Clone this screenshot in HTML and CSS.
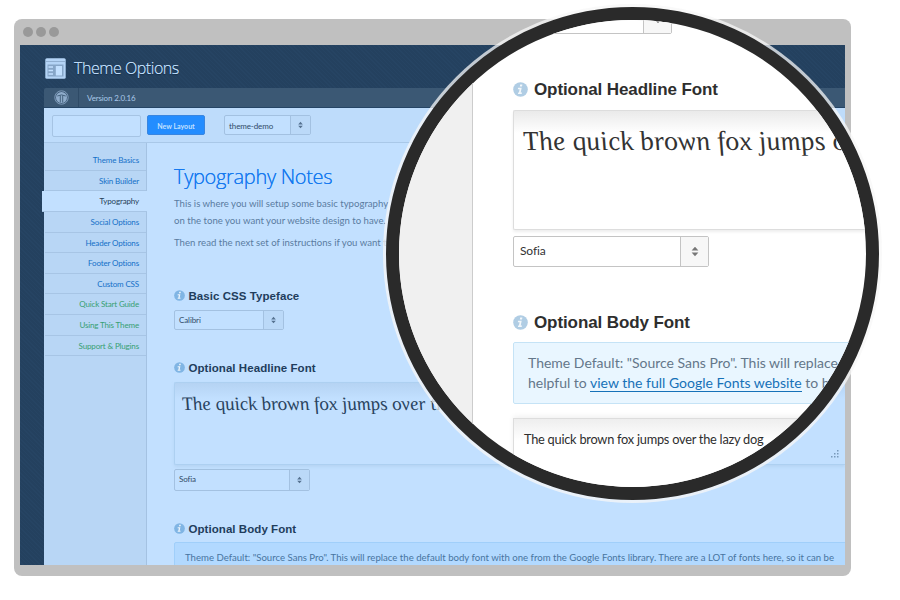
FILE: index.html
```html
<!DOCTYPE html>
<html lang="en">
<head>
<meta charset="utf-8">
<title>Theme Options</title>
<link rel="stylesheet" href="styles.css">
</head>
<body>
<svg class="defs" width="0" height="0" aria-hidden="true">
  <symbol id="info" viewBox="0 0 15 15"><circle cx="7.5" cy="7.5" r="7.3"/><path d="M7.200 2.500h2.200l-.4 2H6.800zM5.100 5.700h3.600l-1 4.700h1.300l-.3 1.500H4.900l.3-1.500h.7l.7-3.200H4.800z" fill="#fff" fill-opacity=".85"/></symbol>
  <symbol id="arrows" viewBox="0 0 8 12"><path d="M4 .8 7.700 5H.3zM4 11.200 7.700 7H.3z"/></symbol>
</svg>
<div class="browser">
  <div class="dots"><i></i><i></i><i></i></div>
  <div class="screen">
    <header class="brand">
      <svg width="21" height="21" viewBox="0 0 21 21"><rect x=".3" y=".3" width="20.400" height="20.400" rx="1.500" fill="#b4d4f6"/><path d="M1 3.500h19" stroke="#86a6c8" stroke-width=".8"/><path d="M2.500 6.500h16v12h-16z" fill="#86a6c8"/><path d="M3.500 9h4.500M3.500 12.500h4.500M3.500 16h4.500" stroke="#c2e0ff" stroke-width="1.600"/><rect x="10.800" y="8" width="6.200" height="9.500" fill="#c2e0ff"/></svg>
      <h1>Theme Options</h1>
    </header>
    <div class="app">
      <div class="version">
        <div class="logo"><svg width="15" height="15" viewBox="0 0 15 15"><circle cx="7.500" cy="7.500" r="6.700" fill="none" stroke="#8faccb" stroke-width=".8"/><circle cx="7.500" cy="7.500" r="5.500" fill="#8faccb"/><path d="M3.300 6q4.200-2.200 8.400 0M6.300 5.500v7M8.700 5.500v7" stroke="#3b5874" stroke-width=".9" fill="none"/></svg></div>
        <span>Version 2.0.16</span>
      </div>
      <div class="toolbar">
        <div class="field"></div>
        <div class="button">New Layout</div>
        <div class="select demo"><span>theme-demo</span><b><svg><use href="#arrows"/></svg></b></div>
      </div>
      <div class="body">
        <nav>
          <a>Theme Basics</a><a>Skin Builder</a><a class="active">Typography</a><a>Social Options</a><a>Header Options</a><a>Footer Options</a><a>Custom CSS</a><a class="green">Quick Start Guide</a><a class="green">Using This Theme</a><a class="green">Support &amp; Plugins</a>
        </nav>
        <main>
          <h2>Typography Notes</h2>
          <p>This is where you will setup some basic typography<br>on the tone you want your website design to have.</p>
          <p>Then read the next set of instructions if you want to</p>
          <h3 class="first"><svg><use href="#info"/></svg>Basic CSS Typeface</h3>
          <div class="select calibri"><span>Calibri</span><b><svg><use href="#arrows"/></svg></b></div>
          <h3 class="second"><svg><use href="#info"/></svg>Optional Headline Font</h3>
          <div class="sample"><span>The quick brown fox jumps over the</span><svg class="grip" width="8" height="8" viewBox="0 0 8 8"><path d="M6 0h1.500v1.500H6zM3 3h1.500v1.500H3zM6 3h1.500v1.500H6zM0 6h1.500v1.500H0zM3 6h1.500v1.500H3zM6 6h1.500v1.500H6z"/></svg></div>
          <div class="select sofia"><span>Sofia</span><b><svg><use href="#arrows"/></svg></b></div>
          <h3 class="third"><svg><use href="#info"/></svg>Optional Body Font</h3>
          <div class="notice">Theme Default: "Source Sans Pro". This will replace the default body font with one from the Google Fonts library. There are a LOT of fonts here, so it can be</div>
        </main>
      </div>
    </div>
  </div>
</div>
<div class="lens">
  <div class="lens-side"></div>
  <div class="lens-main">
    <div class="select cut"><span></span><b><svg><use href="#arrows"/></svg></b></div>
    <h3><svg><use href="#info"/></svg>Optional Headline Font</h3>
    <div class="sample"><span>The quick brown fox jumps o</span></div>
    <div class="select big"><span>Sofia</span><b><svg><use href="#arrows"/></svg></b></div>
    <h3 class="body-font"><svg><use href="#info"/></svg>Optional Body Font</h3>
    <div class="notice">Theme Default: "Source Sans Pro". This will replace<br>helpful to <a>view the full Google Fonts website</a> to be</div>
    <div class="plain">The quick brown fox jumps over the lazy dog</div>
  </div>
</div>
</body>
</html>
```
FILE: styles.css
```css
* { box-sizing: border-box; }
body { margin: 0; width: 900px; height: 600px; position: relative; overflow: hidden; background: #fff; font-family: Lato, "Liberation Sans", sans-serif; }
h1, h2, h3, p { margin: 0; }
.defs { position: absolute; }

.browser { width: 837px; height: 557px; margin: 19px 0 0 14px; padding: 0 6px 11px; background: #c0c0c0; border-radius: 8px; display: flow-root; }
.dots { height: 26px; padding-left: 3px; display: flex; gap: 3px; align-items: center; }
.dots i { width: 10px; height: 10px; border-radius: 50%; background: #999; }
.screen { height: 520px; overflow: hidden; padding-left: 24px; background: repeating-linear-gradient(45deg, #24415f 0 2px, #264463 2px 3px); }
.brand { height: 43px; display: flex; gap: 8px; align-items: center; padding: 3px 0 0 1px; }
.brand h1 { font: 300 16px/22px "Open Sans", sans-serif; letter-spacing: -.45px; color: #c2e0ff; text-shadow: 0 1px 1px #132c46, 0 0 .5px #c2e0ff; white-space: nowrap; }
.version { height: 20px; background: #3b5874; border-bottom: 1px solid #254566; display: flex; align-items: center; font-size: 8px; color: #a9c8e9; border-radius: 2px 0 0 0; }
.logo { width: 35px; height: 19px; border-right: 1px solid #2e4a66; padding: 2px 0 0 10px; }
.logo svg { display: block; }
.version span { margin-left: 8px; letter-spacing: -.15px; padding-top: 1px; }
.toolbar { height: 35px; background: #bedcfb; border-bottom: 1px solid #a9c8e8; display: flex; padding: 7px 0 0 8px; }
.field { width: 89px; height: 22px; border: 1px solid #a6c4e4; border-radius: 2px; background: #c2e0ff; }
.button { width: 58px; height: 20px; margin-left: 6px; background: #248dff; border: 1px solid #3a86e0; border-radius: 2px; color: #c2e0ff; font: 700 7px/20px Lato, sans-serif; text-align: center; }

.select { display: flex; border: 1px solid #a3c1e1; border-radius: 2px; background: #c2e0ff; font-size: 8px; letter-spacing: -.1px; color: #304b68; }
.select span { flex: 1; padding-left: 4px; }
.select b { width: 20px; border-left: 1px solid #a3c1e1; background: #bbd9f8; display: flex; align-items: center; justify-content: center; }
.select svg { width: 5px; height: 8px; fill: #55718f; }
.demo { width: 87px; height: 20px; margin-left: 19px; line-height: 20px; }

.body { display: flex; height: 422px; }
nav { width: 103px; flex: none; padding: 7px 0 0 1px; background: #b8d6f5; border-right: 1px solid #a4c2e2; }
nav a { display: block; height: 20.650px; padding-right: 7px; border-bottom: 1px solid #a7c5e5; text-align: right; font-size: 8px; letter-spacing: -.15px; line-height: 21.300px; color: #1470c8; }
nav .active { margin-left: -3px; background: #c2e0ff; color: #263e59; position: relative; margin-right: -1px; padding-right: 8px; }
nav .green { color: #379f72; }
main { flex: 1; min-width: 0; padding: 20px 0 0 27px; background: #c2e0ff; white-space: nowrap; }
h2 { font: 300 20px/28px "Open Sans", sans-serif; letter-spacing: -.32px; color: #1679ef; text-shadow: 0 0 .5px #1679ef; }
main p { font-size: 9.600px; line-height: 16.500px; color: #5a7c9f; margin-top: 5px; }
main p + p { margin-top: 6px; }
h3 { font: 700 11.500px/14px "Liberation Sans", sans-serif; color: #1f3d5c; display: flex; align-items: center; letter-spacing: .06px; }
h3 svg { width: 11px; height: 11px; margin-right: 3.500px; fill: #80b5e4; }
.first { margin-top: 37px; }
.calibri { width: 110px; height: 20px; margin-top: 7px; line-height: 18px; }
.second { margin-top: 31px; }
main .sample { height: 83px; margin-top: 7px; position: relative; }
.sample { border: 1px solid #add0f1; border-right: 0; border-radius: 2px 0 0 2px; background: linear-gradient(#b5d3f3, #c2e0ff 16px); box-shadow: 0 2px 3px #adcaea88; color: #29435e; font: italic 19px/42px "Liberation Serif", serif; letter-spacing: 0; padding-left: 7px; }
.sample span { display: inline-block; transform: skewX(14deg); }
.grip { position: absolute; right: 6px; bottom: 6px; fill: #7899ba; }
.sofia { width: 136px; height: 22px; margin-top: 4px; line-height: 18px; }
.third { margin-top: 31px; }
.notice { background: #b2d9ff; border: 1px solid #a0cffa; border-radius: 2px; }
main .notice { height: 50px; margin: 6px -4px 0 0; padding-left: 10px; font-size: 9.600px; line-height: 29px; color: #48759f; }

.lens { position: absolute; left: 386px; top: 7px; width: 493px; height: 493px; border: 13px solid #2a2a2a; border-radius: 50%; box-shadow: 0 0 0 3px rgba(247,247,247,.75); background: #fff; overflow: hidden; display: flex; white-space: nowrap; }
.lens-side { width: 74px; flex: none; background: #f0f0f0; border-right: 1px solid #ccc; }
.lens-main { flex: 1; padding-left: 40px; }
.lens .select { background: #fff; border-color: #c4c4c4; color: #333; font-size: 12px; height: 31px; line-height: 27px; }
.lens .select span { padding-left: 6px; }
.lens .select b { width: 28px; border-color: #c4c4c4; background: #f7f7f7; }
.lens .select svg { width: 8px; height: 11px; fill: #777; }
.cut { width: 159px; margin-top: -17px; }
.lens h3 { font-size: 17px; line-height: 20px; letter-spacing: -.1px; color: #2e2e2e; margin-top: 46px; }
.lens h3 svg { width: 15px; height: 15px; margin: -1px 6px 0 0; fill: #b0cde4; }
.lens .sample { height: 120px; margin-top: 10px; border-color: #ddd; background: linear-gradient(#eaeaea, #fff 22px); box-shadow: 0 2px 3px #eee; color: #333; font-size: 27.500px; letter-spacing: .2px; line-height: 60px; padding-left: 9px; }
.lens .big { width: 196px; margin-top: 6px; }
.lens h3.body-font { margin-top: 46px; }
.lens .notice { height: 62px; margin-top: 9px; padding: 10px 0 0 14px; border-color: #c5e3f6; background: #e9f6ff; color: #64778a; font-size: 14px; line-height: 20px; }
.notice a { color: #1671b8; border-bottom: 1px solid #1671b8; }
.plain { height: 90px; margin-top: 14px; border: 1px solid #ddd; background: linear-gradient(#eee, #fff 22px); padding-left: 10px; font-size: 12.800px; letter-spacing: -.25px; line-height: 40px; color: #2e2e2e; box-shadow: 0 -2px 5px #f2f2f2; }
```
